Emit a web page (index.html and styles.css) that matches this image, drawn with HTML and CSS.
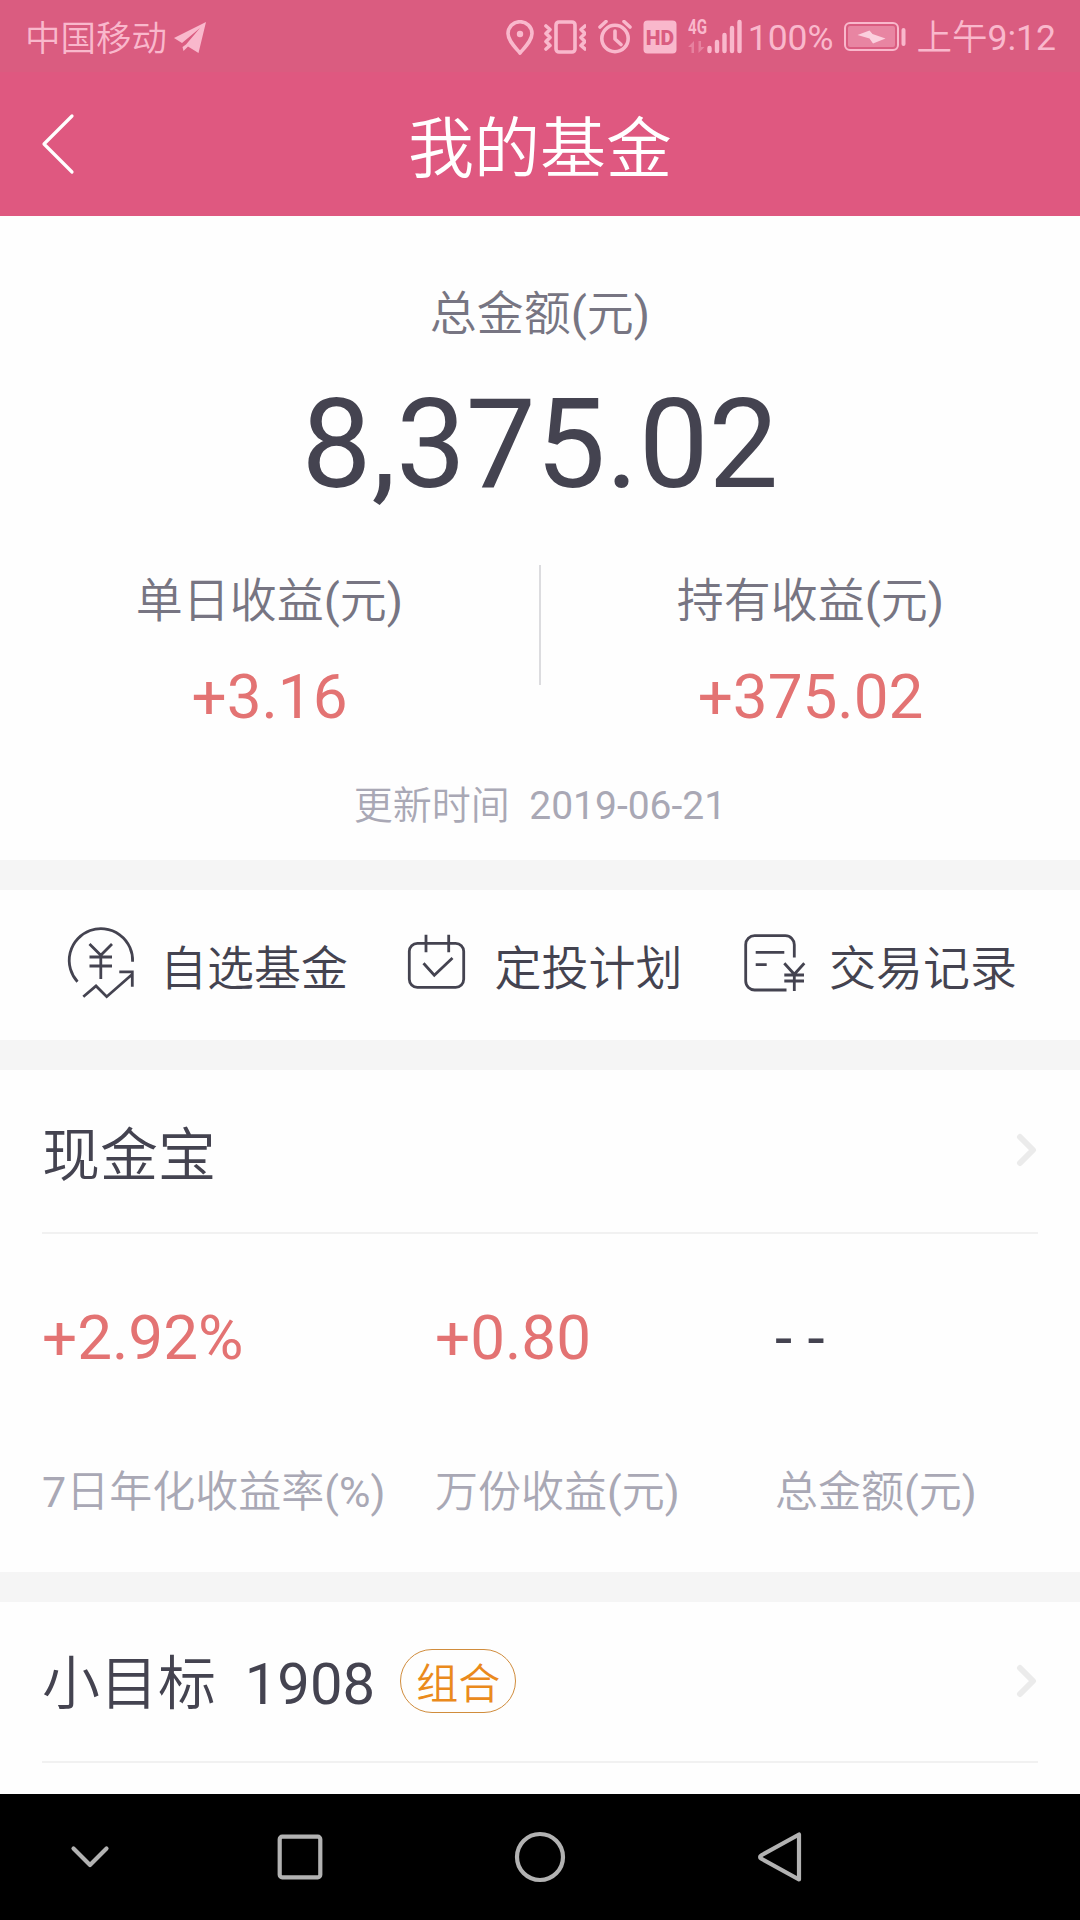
FILE: index.html
```html
<!DOCTYPE html>
<html lang="zh-CN">
  <head>
    <meta charset="UTF-8" />
    <meta name="viewport" content="width=device-width, initial-scale=1.0" />
    <title>我的基金</title>
    <link rel="stylesheet" href="styles.css">
  </head>
  <body>
    <div class="status-bar">
      <span class="carrier">中国移动</span>
      <svg class="icon-plane" width="34" height="34" viewBox="0 0 34 34">
        <path d="M33 1L1 17l8 5L27 7 13 23.500l-3.500 2.500 1 4 4.500-4.500L25.500 32z" />
      </svg>
      <div class="status-right">
        <svg width="28" height="36" viewBox="0 0 28 36" class="line">
          <path d="M14 33C9 27 2 20.500 2 13.500a12 11.800 0 0 1 24 0C26 20.500 19 27 14 33z" />
          <circle cx="14" cy="14" r="3.200" class="solid" />
        </svg>
        <svg class="icon-vibrate line" width="42" height="36" viewBox="0 0 42 36">
          <rect x="12" y="2" width="19" height="30" rx="3" />
          <path d="M2 6l4 3.500-4 4 4 4-4 4 4 4-4 3.500M41 6l-4 3.500 4 4-4 4 4 4-4 4 4 3.500" />
        </svg>
        <svg class="icon-alarm line" width="34" height="36" viewBox="0 0 34 36">
          <circle cx="17" cy="18.500" r="13.200" />
          <path d="M17 11v8l6 5.500M2 7l6-5.500M32 7l-6-5.500" />
        </svg>
        <svg class="icon-hd" width="34" height="36" viewBox="0 0 34 36">
          <rect x="0.500" y="0.500" width="33" height="33" rx="4" />
          <text x="17" y="24.500">HD</text>
        </svg>
        <svg class="icon-signal" width="54" height="52" viewBox="0 -8 54 52">
          <text x="0" y="14" textLength="19" lengthAdjust="spacingAndGlyphs">4G</text>
          <path class="faint" d="M0 27l6-6v12H3.500v-6zM16.500 27l-6 6V21H13v6z" />
          <path class="bars" d="M21.500 28v3M29 22v9M36.500 15v16M44 8v23M51.500 2v29" />
        </svg>
        <span class="percent">100%</span>
        <svg class="icon-battery" width="62" height="36" viewBox="0 0 62 36">
          <rect x="1" y="3" width="53" height="27" rx="5" class="shell" />
          <rect x="4" y="6" width="47" height="21" rx="2" class="fill" />
          <path d="M13.500 15l12-4.500 3 3.500 13 4.500L29 23.500l-3.500-5z" class="bolt" />
          <rect x="57.500" y="8" width="4" height="18" rx="2" />
        </svg>
        <span class="time">上午9:12</span>
      </div>
    </div>

    <header class="header">
      <svg class="back" width="40" height="64" viewBox="0 0 40 64">
        <path d="M33 4L5 32l28 28" />
      </svg>
      <h1>我的基金</h1>
    </header>

    <section class="summary">
      <p class="label">总金额(元)</p>
      <p class="total">8,375.02</p>
      <div class="income">
        <div class="income-item">
          <p class="label">单日收益(元)</p>
          <p class="value up">+3.16</p>
        </div>
        <div class="income-divider"></div>
        <div class="income-item">
          <p class="label">持有收益(元)</p>
          <p class="value up">+375.02</p>
        </div>
      </div>
      <p class="update-time">更新时间  2019-06-21</p>
    </section>

    <nav class="menu">
      <a class="menu-item">
        <svg width="72" height="80" viewBox="0 0 72 80">
          <path d="M12.500 56.700A31.700 31.700 0 1 1 67.600 36.700" />
          <path d="M24.500 19l11.300 11.300L47 19M24.500 32H47M24.500 41H47M35.800 30v24" />
          <path d="M18.300 71.700L31 61l10.700 10.700L67 49.500M54.300 46.800h13v15" />
        </svg>
        <span>自选基金</span>
      </a>
      <a class="menu-item">
        <svg width="72" height="80" viewBox="0 0 72 80">
          <rect x="9.300" y="18.300" width="54.400" height="44" rx="8" />
          <path d="M26 9.700v17.600M48.700 9.700v17.600M23.500 38.300l10.800 12L52.500 33" />
        </svg>
        <span>定投计划</span>
      </a>
      <a class="menu-item">
        <svg width="72" height="80" viewBox="0 0 72 80">
          <path d="M60.300 32.500V20a9 9 0 0 0-9-9.300H21a9 9 0 0 0-9.300 9.300v36a9 9 0 0 0 9.300 9h31.500" />
          <path d="M21.700 27.300h28.600M21.700 39.700h11" />
          <path d="M50.300 38.300l10 11 10-11M50.300 50H70M50.300 56H70M60.300 49v17" />
        </svg>
        <span>交易记录</span>
      </a>
    </nav>

    <section class="fund">
      <div class="fund-title">
        <h2>现金宝</h2>
        <svg class="arrow" width="22" height="36" viewBox="0 0 22 36">
          <path d="M4 5l13 13L4 31" />
        </svg>
      </div>
      <div class="fund-data">
        <div>
          <p class="value up">+2.92%</p>
          <p class="name">7日年化收益率(%)</p>
        </div>
        <div>
          <p class="value up">+0.80</p>
          <p class="name">万份收益(元)</p>
        </div>
        <div>
          <p class="value">- -</p>
          <p class="name">总金额(元)</p>
        </div>
      </div>
    </section>

    <section class="fund fund-target">
      <div class="fund-title">
        <h2>小目标  1908</h2>
        <span class="tag">组合</span>
        <svg class="arrow" width="22" height="36" viewBox="0 0 22 36">
          <path d="M4 5l13 13L4 31" />
        </svg>
      </div>
    </section>

    <footer class="nav-bar">
      <svg width="52" height="52" viewBox="0 0 52 52">
        <path d="M9.500 17.500L26 34l16.500-16.500" />
      </svg>
      <svg width="52" height="52" viewBox="0 0 52 52">
        <rect x="5.700" y="5.700" width="40.600" height="40.600" rx="2.500" />
      </svg>
      <svg width="52" height="52" viewBox="0 0 52 52">
        <circle cx="26" cy="26" r="23" />
      </svg>
      <svg width="52" height="52" viewBox="0 0 52 52">
        <path d="M45 3.500v45L7 27.500a1.700 1.700 0 0 1 0-3z" />
      </svg>
    </footer>
  </body>
</html>
```
FILE: styles.css
```css
* {
  box-sizing: border-box;
}

body {
  margin: 0;
  width: 1080px;
  height: 1920px;
  overflow: hidden;
  display: flex;
  flex-direction: column;
  background-color: #f5f5f5;
  color: #444350;
  font-family: Roboto, "Noto Sans CJK SC DemiLight", "Noto Sans CJK SC Light", "Noto Sans CJK SC", sans-serif;
}

h1,
h2,
p {
  margin: 0;
  font-weight: 400;
  white-space: pre;
}

svg {
  display: block;
  flex: none;
}

/* status bar */
.status-bar {
  height: 72px;
  flex: none;
  display: flex;
  align-items: center;
  padding: 4px 24px 0 25px;
  background-color: #da5c80;
  color: #f9b8cc;
  font-size: 35.5px;
  line-height: 44px;
  white-space: nowrap;
}

.status-bar svg {
  fill: #f9b8cc;
}

.status-bar .line {
  fill: none;
  stroke: #f9b8cc;
  stroke-width: 3.6;
  stroke-linecap: round;
  stroke-linejoin: round;
}

.status-bar .solid {
  fill: #f9b8cc;
  stroke: none;
}

.carrier {
  padding-top: 1px;
}

.icon-plane {
  margin-left: 6px;
}

.status-right {
  display: flex;
  align-items: center;
  margin-left: auto;
}

.icon-vibrate {
  margin-left: 10px;
}

.icon-alarm {
  margin-left: 12px;
}

.icon-hd {
  margin-left: 11px;
}

.icon-hd text {
  fill: #da5c80;
  font-size: 21px;
  font-weight: 900;
  text-anchor: middle;
}

.icon-signal {
  margin-left: 11px;
}

.icon-signal text {
  font-size: 20px;
  font-weight: 700;
}

.icon-signal .faint {
  opacity: 0.4;
}

.icon-signal .bars {
  stroke: #f9b8cc;
  stroke-width: 4.4;
  stroke-linecap: round;
}

.percent {
  margin-left: 6px;
}

.icon-battery {
  margin-left: 10px;
}

.icon-battery .shell {
  fill: none;
  stroke: #f9b8cc;
  stroke-width: 2;
}

.icon-battery .fill {
  opacity: 0.45;
}

.icon-battery .bolt {
  fill: #fbd0de;
}

.time {
  margin-left: 11px;
}

/* header */
.header {
  height: 144px;
  flex: none;
  display: grid;
  grid-template-columns: 120px 1fr 120px;
  align-items: center;
  background-color: #df5880;
  color: #fff;
}

.header h1 {
  padding-top: 12px;
  font-size: 66px;
  line-height: 80px;
  text-align: center;
}

.back {
  margin-left: 39px;
  fill: none;
  stroke: #fff;
  stroke-width: 3.2;
  stroke-linecap: round;
  stroke-linejoin: round;
}

/* summary */
.summary {
  height: 644px;
  flex: none;
  padding-top: 68px;
  background-color: #fefefe;
  text-align: center;
}

.label {
  color: #777582;
  font-size: 47px;
  line-height: 60px;
}

.total {
  padding-top: 30px;
  font-size: 124.5px;
  line-height: 140px;
}

.income {
  display: flex;
  padding-top: 51px;
}

.income-item {
  flex: 1;
  padding-top: 6px;
}

.income-divider {
  width: 2px;
  height: 120px;
  background-color: #dcdcdf;
}

.value {
  font-size: 62px;
  line-height: 72px;
}

.income .value {
  padding-top: 30px;
}

.up {
  color: #e37373;
}

.update-time {
  padding-top: 48px;
  color: #a9a8b5;
  font-size: 39px;
  line-height: 50px;
}

/* menu */
.menu {
  height: 150px;
  flex: none;
  display: flex;
  align-items: center;
  justify-content: space-between;
  margin-top: 30px;
  padding: 0 63px 0 65px;
  background-color: #fefefe;
}

.menu-item {
  display: flex;
  align-items: center;
  gap: 23px;
  font-size: 47px;
  line-height: 60px;
}

.menu-item span {
  padding-top: 8px;
}

.menu-item svg {
  fill: none;
  stroke: #444350;
  stroke-width: 2.8;
}

/* funds */
.fund {
  height: 502px;
  flex: none;
  margin-top: 30px;
  padding: 0 42px;
  background-color: #fefefe;
}

.fund-title {
  height: 164px;
  display: flex;
  align-items: center;
  padding-bottom: 2px;
  border-bottom: 2px solid #f1f1f1;
}

.fund-title h2 {
  padding-top: 12px;
  font-size: 58px;
  line-height: 72px;
}

.arrow {
  margin-left: auto;
  fill: none;
  stroke: #ebebeb;
  stroke-width: 6;
  stroke-linecap: round;
  stroke-linejoin: round;
}

.fund-data {
  display: grid;
  grid-template-columns: 393px 340px 1fr;
  padding-top: 68px;
}

.fund-data .name {
  padding-top: 93px;
  color: #a9a8b5;
  font-size: 43px;
  line-height: 50px;
}

.fund-target {
  height: 192px;
}

.fund-target .fund-title {
  height: 161px;
}

.fund-target h2 {
  padding-top: 7px;
}

.tag {
  width: 116px;
  height: 64px;
  margin-left: 25px;
  padding-top: 4px;
  border: 1px solid #d08c3c;
  border-radius: 32px;
  color: #ea8a1c;
  font-size: 42px;
  line-height: 62px;
  text-align: center;
}

/* bottom system bar */
.nav-bar {
  height: 126px;
  flex: none;
  display: grid;
  grid-template-columns: 180px 240px 240px 240px;
  align-items: center;
  justify-items: center;
  background-color: #000;
}

.nav-bar svg {
  fill: none;
  stroke: #b2b2b2;
  stroke-width: 4.2;
  stroke-linecap: round;
  stroke-linejoin: round;
}
```
